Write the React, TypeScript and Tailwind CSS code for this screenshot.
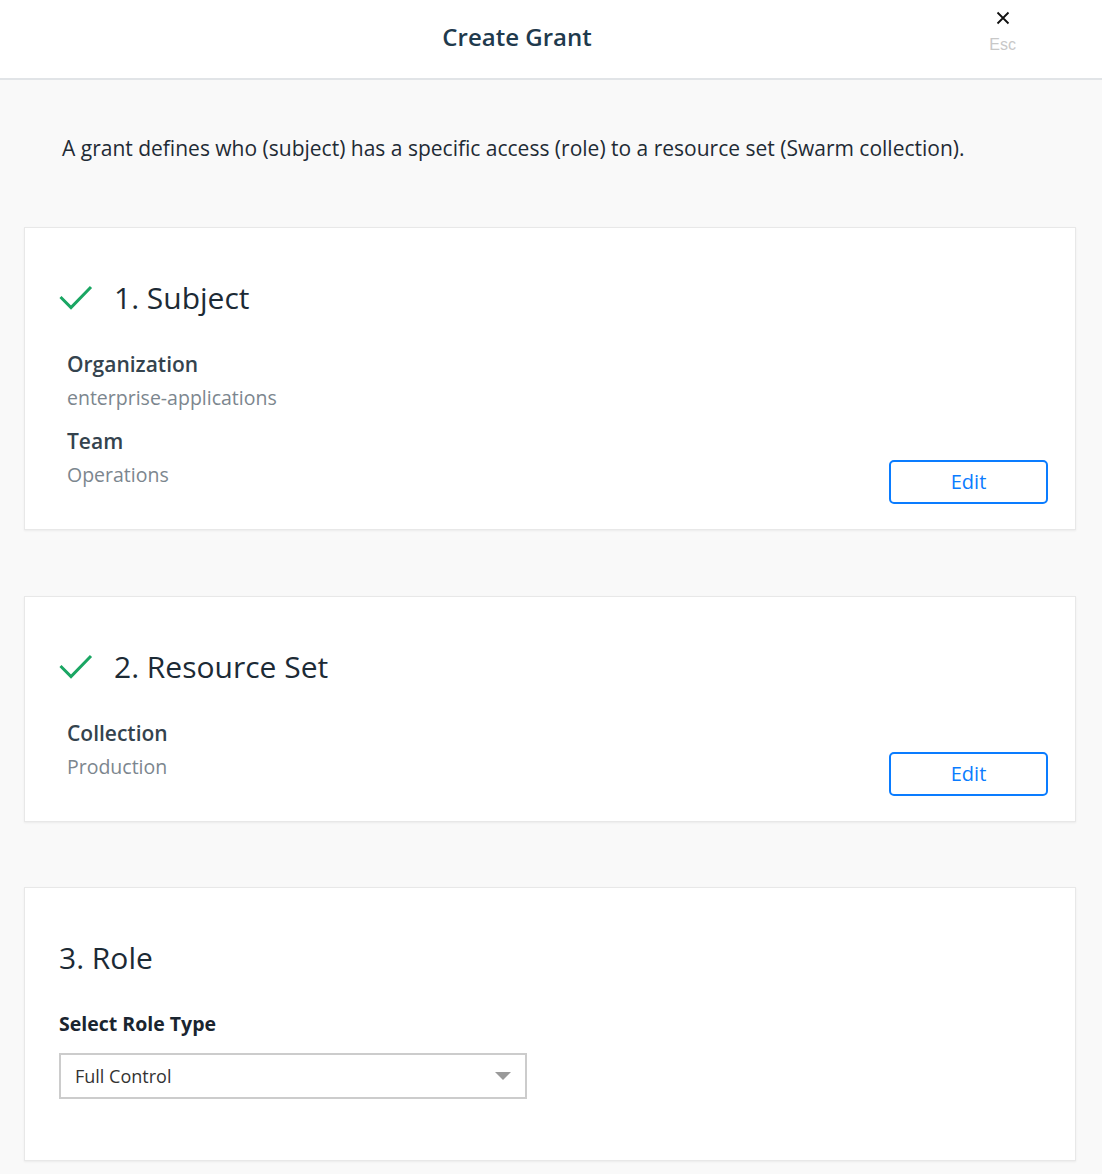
import React from "react";

const font = { fontFamily: '"Open Sans", "Noto Sans", sans-serif' };

function Check() {
  return (
    <svg width="34" height="26" viewBox="0 0 34 26" className="shrink-0">
      <polyline points="1.5,12 12,22.5 32,2" fill="none" stroke="#1aa663" strokeWidth="3" />
    </svg>
  );
}

function EditButton() {
  return (
    <button className="w-[159px] h-[44px] border-2 border-[#0a7cff] rounded-[5px] text-[#0a7cff] text-[20px] bg-white self-end shrink-0">
      Edit
    </button>
  );
}

function Field({ label, value, first }: { label: string; value: string; first?: boolean }) {
  return (
    <div className={first ? "" : "mt-[9px]"}>
      <div className="h-[34px] leading-[34px] text-[21px] font-semibold text-[#34434e]">{label}</div>
      <div className="h-[34px] leading-[34px] text-[19.5px] text-[#7c868e]">{value}</div>
    </div>
  );
}

export default function App() {
  return (
    <div className="min-h-[1174px] bg-[#f9f9f9]" style={font}>
      <header className="relative h-[80px] bg-white border-b-2 border-[#e1e4e7] flex items-center justify-center">
        <h1 className="text-[24px] font-semibold text-[#1f3a4d] mr-[68px] -mt-[4px]">Create Grant</h1>
        <div className="absolute right-[86px] top-[10px] flex flex-col items-center">
          <svg width="16" height="16" viewBox="0 0 16 16">
            <path d="M2.5 2.5 L13.5 13.5 M13.5 2.5 L2.5 13.5" stroke="#111" strokeWidth="1.8" />
          </svg>
          <span className="text-[16px] text-[#c8c8c8] mt-[7px]" style={{ fontFamily: '"Liberation Sans", Arial, sans-serif' }}>
            Esc
          </span>
        </div>
      </header>

      <div className="pl-[24px] pr-[26px]">
        <p className="pl-[38px] pt-[53px] h-[147px] text-[21px] text-[#1f2b35] leading-[30px]">
          A grant defines who (subject) has a specific access (role) to a resource set (Swarm collection).
        </p>

        <section className="bg-white border border-[#e8e8e8] shadow-[0_1px_2px_rgba(0,0,0,0.06)] pt-[51px] pb-[25px] pl-[34px] pr-[27px] flex justify-between">
          <div className="pb-[12px]">
            <div className="flex items-center h-[38px]">
              <Check />
              <h2 className="ml-[21px] text-[30px] text-[#1c2a35] leading-[38px]">1. Subject</h2>
            </div>
            <div className="pl-[8px] mt-[30px]">
              <Field label="Organization" value="enterprise-applications" first />
              <Field label="Team" value="Operations" />
            </div>
          </div>
          <EditButton />
        </section>

        <section className="mt-[66px] bg-white border border-[#e8e8e8] shadow-[0_1px_2px_rgba(0,0,0,0.06)] pt-[51px] pb-[25px] pl-[34px] pr-[27px] flex justify-between">
          <div className="pb-[12px]">
            <div className="flex items-center h-[38px]">
              <Check />
              <h2 className="ml-[21px] text-[30px] text-[#1c2a35] leading-[38px]">2. Resource Set</h2>
            </div>
            <div className="pl-[8px] mt-[30px]">
              <Field label="Collection" value="Production" first />
            </div>
          </div>
          <EditButton />
        </section>

        <section className="mt-[65px] bg-white border border-[#e8e8e8] shadow-[0_1px_2px_rgba(0,0,0,0.06)] pt-[51px] pb-[61px] pl-[34px] pr-[27px]">
          <h2 className="h-[38px] text-[30px] text-[#1c2a35] leading-[38px]">3. Role</h2>
          <div className="mt-[33px] h-[28px] leading-[28px] text-[19.5px] font-bold text-[#1a2530]">Select Role Type</div>
          <div className="mt-[15px] w-[468px] h-[46px] border-2 border-[#cccccc] flex items-center justify-between pl-[14px] pr-[14px]">
            <span className="text-[18px] text-[#333]">Full Control</span>
            <svg width="16" height="9" viewBox="0 0 16 9">
              <polygon points="0,0 16,0 8,8" fill="#9a9a9a" />
            </svg>
          </div>
        </section>
      </div>
    </div>
  );
}
